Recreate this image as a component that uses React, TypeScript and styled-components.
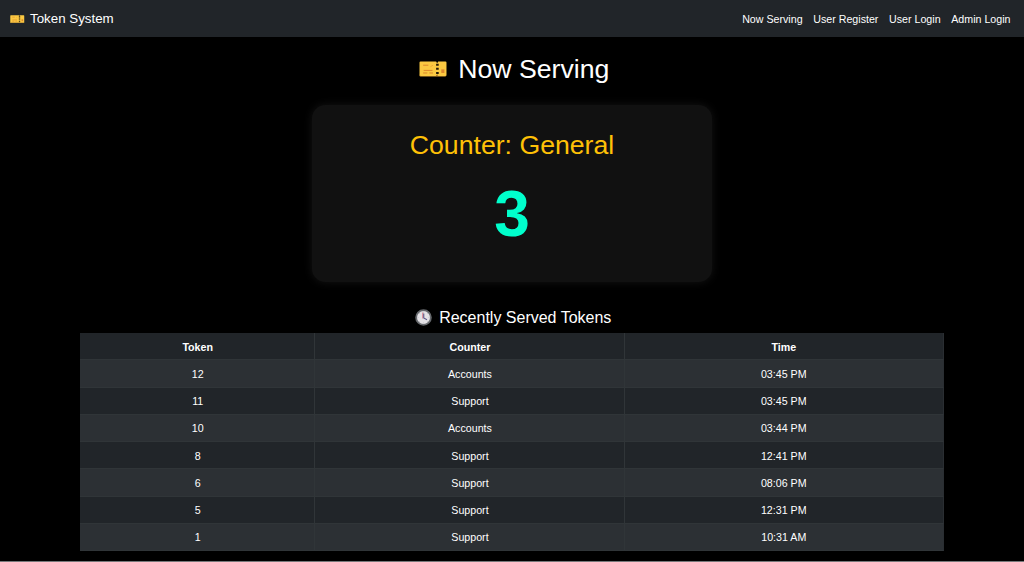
import React from "react";
import styled, { createGlobalStyle } from "styled-components";

const GlobalStyle = createGlobalStyle`
  * { box-sizing: border-box; }
  html, body { margin: 0; background: #000; }
  body {
    font-family: "Liberation Sans", Arial, sans-serif;
    font-size: 10.667px;
    line-height: 1.5;
    color: #fff;
    overflow: hidden;
  }
`;

const Page = styled.div`
  display: flex;
  flex-direction: column;
  height: 562px;
  border-bottom: 1px solid #77797b;
`;

const Navbar = styled.nav`
  display: flex;
  align-items: center;
  justify-content: space-between;
  flex: none;
  height: 37.33px;
  padding: 0 13.5px 0 10px;
  background: #212529;
`;

const Brand = styled.a`
  display: flex;
  align-items: center;
  gap: 5.5px;
  font-size: 13.333px;
  line-height: 20px;
`;

const NavLinks = styled.div`
  display: flex;
  gap: 10.67px;
`;

const NavLink = styled.a`
  line-height: 16px;
`;

const Main = styled.main`
  display: flex;
  flex-direction: column;
  align-items: center;
  padding-top: 16px;
`;

const Title = styled.h1`
  display: flex;
  align-items: center;
  gap: 11px;
  margin: 0;
  padding-left: 4.5px;
  font-size: 26.667px;
  font-weight: 400;
  line-height: 32px;
`;

const CounterCard = styled.section`
  display: flex;
  flex-direction: column;
  align-items: center;
  width: 400px;
  height: 176.5px;
  margin-top: 20px;
  padding-top: 23.5px;
  border-radius: 13.33px;
  background: #111;
  box-shadow: 0 0 10px rgba(255, 255, 255, 0.08);
`;

const CounterName = styled.h2`
  margin: 0;
  font-size: 26.667px;
  font-weight: 400;
  line-height: 32px;
  color: #ffc107;
`;

const CurrentToken = styled.div`
  margin-top: 5px;
  font-size: 64px;
  font-weight: 700;
  line-height: 96px;
  color: #00ffcc;
`;

const Subtitle = styled.h4`
  display: flex;
  align-items: center;
  gap: 7px;
  margin: 26px 0 6px;
  padding-left: 2.5px;
  font-size: 16px;
  font-weight: 400;
  line-height: 19.2px;
`;

const Table = styled.div`
  width: 864px;
`;

const Row = styled.div<{ $striped?: boolean; $head?: boolean }>`
  display: grid;
  grid-template-columns: 235px 309.5px 1fr;
  height: 27.25px;
  font-weight: ${(p) => (p.$head ? 700 : 400)};
  background: ${(p) => (p.$striped ? "#2c3034" : "#212529")};
`;

const Cell = styled.div`
  display: flex;
  align-items: center;
  justify-content: center;
  padding: 0.9px 0 0 1.4px;
  border: solid #303538;
  border-width: 0 1px 1px 0;

  &:last-child {
    padding-left: 0;
    border-right-color: #2a2e32;
  }
`;

const TicketIcon = ({ width }: { width: number }) => (
  <svg width={width} height={width * 0.56} viewBox="0 0 54 30">
    <path
      d="M3 1H33L35 4L37 1H51Q53 1 53 3V27Q53 29 51 29H37L35 26L33 29H3Q1 29 1 27V3Q1 1 3 1Z"
      fill="#fbc942"
    />
    <path d="M1 25Q1 29 4 29H33L35 26L37 29H51Q53 29 53 26V28L51 30H3Q1 30 1 28Z" fill="#e5a434" />
    <path d="M8 8H18M9 18H26M8 23H16M20 23H27" stroke="#d9822b" strokeWidth="1.8" />
    <path d="M22 11L27 8" stroke="#e9a035" strokeWidth="1.5" />
    <rect x="43" y="16" width="6" height="7" fill="#dc872d" />
    <path d="M33 5H38V9H33ZM33 13H38V17H33ZM33 21H38V25H33Z" fill="#241a08" />
  </svg>
);

const ClockIcon = () => (
  <svg width="17" height="17" viewBox="0 0 34 34">
    <circle cx="17" cy="17" r="14.8" fill="#e4e2e6" stroke="#65686c" strokeWidth="3.6" />
    <path
      d="M17 5V7M17 27V29M5 17H7M27 17H29M8.5 8.5L10 10M25.5 8.5L24 10M8.5 25.5L10 24M25.5 25.5L24 24"
      stroke="#b0b0b6"
      strokeWidth="1.2"
    />
    <path d="M15.5 19V7" stroke="#d97884" strokeWidth="2" />
    <path d="M17.5 9V18L24 21.5" fill="none" stroke="#5a5788" strokeWidth="2.2" />
  </svg>
);

const links = ["Now Serving", "User Register", "User Login", "Admin Login"];

const served = [
  ["12", "Accounts", "03:45 PM"],
  ["11", "Support", "03:45 PM"],
  ["10", "Accounts", "03:44 PM"],
  ["8", "Support", "12:41 PM"],
  ["6", "Support", "08:06 PM"],
  ["5", "Support", "12:31 PM"],
  ["1", "Support", "10:31 AM"],
];

export default function App() {
  return (
    <Page>
      <GlobalStyle />
      <Navbar>
        <Brand>
          <TicketIcon width={14.5} />
          Token System
        </Brand>
        <NavLinks>
          {links.map((label) => (
            <NavLink key={label}>{label}</NavLink>
          ))}
        </NavLinks>
      </Navbar>
      <Main>
        <Title>
          <TicketIcon width={28} />
          Now Serving
        </Title>
        <CounterCard>
          <CounterName>Counter: General</CounterName>
          <CurrentToken>3</CurrentToken>
        </CounterCard>
        <Subtitle>
          <ClockIcon />
          Recently Served Tokens
        </Subtitle>
        <Table>
          <Row $head>
            <Cell>Token</Cell>
            <Cell>Counter</Cell>
            <Cell>Time</Cell>
          </Row>
          {served.map(([token, counter, time], i) => (
            <Row key={token} $striped={i % 2 === 0}>
              <Cell>{token}</Cell>
              <Cell>{counter}</Cell>
              <Cell>{time}</Cell>
            </Row>
          ))}
        </Table>
      </Main>
    </Page>
  );
}
